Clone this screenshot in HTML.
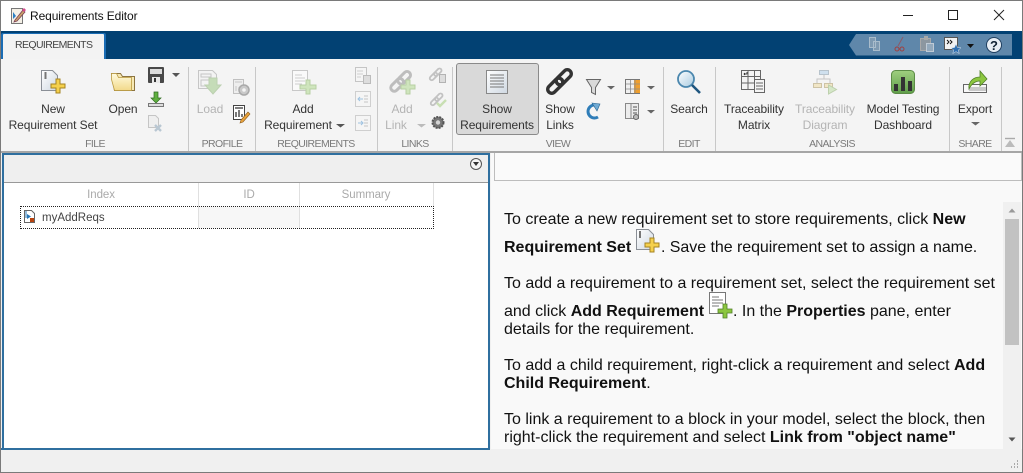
<!DOCTYPE html>
<html><head><meta charset="utf-8"><title>Requirements Editor</title>
<style>
html,body{margin:0;padding:0;background:#f0f0f0}
#w{position:relative;width:1023px;height:473px;overflow:hidden;background:#f0f0f0;font-family:"Liberation Sans",sans-serif}
#w div,#w span.a{position:absolute}
.l{position:absolute;font-size:12px;line-height:16px;letter-spacing:-.08px;color:#333;white-space:nowrap;transform:translateX(-50%)}
.d{color:#b4b4b4}
.g{position:absolute;top:137px;font-size:10.5px;line-height:14px;letter-spacing:-.6px;color:#7a7a7a;white-space:nowrap;transform:translateX(-50%)}
.s{position:absolute;top:67px;width:1px;height:84px;background:#c8c8c8}
.p{position:absolute;left:504px;font-size:16px;line-height:18px;color:#111;white-space:nowrap}
svg{position:absolute;left:0;top:0}
</style></head><body><div id="w">
<div style="left:0;top:0;width:1023px;height:31px;background:#fff"></div>
<div style="left:0;top:31px;width:1023px;height:28px;background:#024173"></div>
<div style="left:1px;top:33px;width:105px;height:26px;background:#1a6cb4;border-radius:2px 2px 0 0"></div>
<div style="left:3px;top:34px;width:101px;height:25px;background:#f3f3f3;border-radius:1px 1px 0 0"></div>
<div style="left:0;top:59px;width:1023px;height:92px;background:#f4f4f4"></div>
<div style="left:0;top:151px;width:1023px;height:2px;background:#a6a6a6"></div>
<div style="left:456px;top:63px;width:81px;height:70px;background:#d9d9d9;border:1px solid #8a8a8a;border-radius:3px"></div>

<div style="left:30px;top:8px;font-size:12px;line-height:16px;letter-spacing:-.1px;color:#111">Requirements Editor</div>
<div style="left:15px;top:37px;font-size:10.5px;line-height:16px;letter-spacing:-.6px;color:#444">REQUIREMENTS</div>

<div class="s" style="left:188px"></div><div class="s" style="left:255px"></div><div class="s" style="left:377px"></div><div class="s" style="left:452px"></div><div class="s" style="left:663px"></div><div class="s" style="left:715px"></div><div class="s" style="left:949px"></div><div class="s" style="left:1001px"></div>

<span class="l" style="left:53px;top:101px">New</span><span class="l" style="left:53px;top:117px">Requirement Set</span>
<span class="l" style="left:123px;top:101px">Open</span>
<span class="l d" style="left:210px;top:101px">Load</span>
<span class="l" style="left:303px;top:101px">Add</span><span class="l" style="left:298px;top:117px">Requirement</span>
<span class="l d" style="left:402px;top:101px">Add</span><span class="l d" style="left:396px;top:117px">Link</span>
<span class="l" style="left:497px;top:101px">Show</span><span class="l" style="left:497px;top:117px">Requirements</span>
<span class="l" style="left:560px;top:101px">Show</span><span class="l" style="left:560px;top:117px">Links</span>
<span class="l" style="left:689px;top:101px">Search</span>
<span class="l" style="left:754px;top:101px">Traceability</span><span class="l" style="left:754px;top:117px">Matrix</span>
<span class="l d" style="left:825px;top:101px">Traceability</span><span class="l d" style="left:825px;top:117px">Diagram</span>
<span class="l" style="left:903px;top:101px">Model Testing</span><span class="l" style="left:903px;top:117px">Dashboard</span>
<span class="l" style="left:975px;top:101px">Export</span>

<span class="g" style="left:95px">FILE</span><span class="g" style="left:222px">PROFILE</span><span class="g" style="left:316px">REQUIREMENTS</span><span class="g" style="left:415px">LINKS</span><span class="g" style="left:558px">VIEW</span><span class="g" style="left:689px">EDIT</span><span class="g" style="left:832px">ANALYSIS</span><span class="g" style="left:975px">SHARE</span>

<!-- left panel -->
<div style="left:2px;top:153px;width:484px;height:293px;border:2px solid #2f6f9f;background:#fff"></div>
<div style="left:4px;top:155px;width:484px;height:27px;background:#efefef;border-bottom:1px solid #999"></div>
<div style="left:199px;top:206px;width:100px;height:22px;background:#f7f7f7"></div>
<div style="left:198px;top:183px;width:1px;height:45px;background:#e0e0e0"></div>
<div style="left:299px;top:183px;width:1px;height:45px;background:#e0e0e0"></div>
<div style="left:433px;top:183px;width:1px;height:23px;background:#e0e0e0"></div>
<div style="left:20px;top:206px;width:412px;height:21px;border:1px dotted #222"></div>
<span class="l" style="left:101px;top:187px;font-size:11.5px;color:#aaa">Index</span>
<span class="l" style="left:249px;top:187px;font-size:11.5px;color:#aaa">ID</span>
<span class="l" style="left:366px;top:187px;font-size:11.5px;color:#aaa">Summary</span>
<div style="left:42px;top:210px;font-size:11.5px;line-height:16px;color:#444">myAddReqs</div>

<!-- right panel -->
<div style="left:491px;top:153px;width:532px;height:296px;background:#f9f9f9"></div>
<div style="left:494px;top:153px;width:526px;height:27px;border:1px solid #bdbdbd;border-top:0;background:#fafafa"></div>
<div style="left:1003px;top:202px;width:18px;height:247px;background:#f0f0f0"></div>
<div style="left:1005px;top:219px;width:14px;height:126px;background:#c2c2c2"></div>

<div class="p" style="top:211px">To create a new requirement set to store requirements, click <b>New</b></div>
<div class="p" style="top:239px"><b>Requirement Set</b></div>
<div class="p" style="top:239px;left:661px;letter-spacing:-.05px">. Save the requirement set to assign a name.</div>
<div class="p" style="top:275px">To add a requirement to a requirement set, select the requirement set</div>
<div class="p" style="top:303px">and click <b>Add Requirement</b></div>
<div class="p" style="top:303px;left:733px">. In the <b>Properties</b> pane, enter</div>
<div class="p" style="top:321px">details for the requirement.</div>
<div class="p" style="top:357px">To add a child requirement, right-click a requirement and select <b>Add</b></div>
<div class="p" style="top:375px"><b>Child Requirement</b>.</div>
<div class="p" style="top:411px">To link a requirement to a block in your model, select the block, then</div>
<div class="p" style="top:429px">right-click the requirement and select <b>Link from "object name"</b></div>
<div style="left:0;top:449px;width:1023px;height:23px;background:#f0f0f0"></div>
<div style="left:0;top:448px;width:490px;height:2px;background:#2f6f9f"></div>

<svg width="1023" height="473" viewBox="0 0 1023 473" fill="none">
<defs>
<linearGradient id="dg" x1="0" y1="0" x2="1" y2="1"><stop offset="0" stop-color="#fff"/><stop offset="1" stop-color="#cfd8e2"/></linearGradient>
<linearGradient id="fo" x1="0" y1="0" x2="0" y2="1"><stop offset="0" stop-color="#fffbe0"/><stop offset="1" stop-color="#f2d98a"/></linearGradient>
<linearGradient id="gb" x1="0" y1="0" x2="0" y2="1"><stop offset="0" stop-color="#9fcf7f"/><stop offset="1" stop-color="#5f9e4a"/></linearGradient>
<linearGradient id="lens" x1="0" y1="0" x2="1" y2="1"><stop offset="0" stop-color="#fff"/><stop offset="1" stop-color="#a9cbe0"/></linearGradient>
</defs>
<!-- window frame -->
<path d="M0 .5H1023M.5 0V473M1022.5 0V473M0 472.5H1023" stroke="#7a7a7a"/>
<!-- app icon -->
<path d="M11.5 8.5h11v15h-11z" fill="#f4f0e6" stroke="#777"/>
<path d="M13 12l3 4-3 3z" fill="#2b7fc4"/><path d="M15 20l8-10 2 2-8 9-3 1z" fill="#c9a26a" stroke="#7b3f55" stroke-width=".8"/><path d="M22 10l2-2 2 2-2 2z" fill="#d24a8a"/>
<!-- window controls -->
<path d="M903 15.5h10" stroke="#222"/><rect x="948.5" y="10.5" width="9" height="9" stroke="#222"/><path d="M994 10l10 10M1004 10l-10 10" stroke="#222"/>
<!-- QAB -->
<path d="M849 45l7-11h156v21.500h-156z" fill="#5f87aa"/>
<path d="M869.500 37.500h6v10h-6zM873.500 41.500h6v9h-6z" fill="#7f9ab1" stroke="#a9bccb"/>
<path d="M903 37l-5 9" stroke="#8b5a68"/><circle cx="897" cy="49" r="2" stroke="#a04040"/><circle cx="902" cy="49" r="2" stroke="#a04040"/>
<path d="M920.500 38.500h10v12h-10z" fill="#8c97a0" stroke="#a9a9a9"/><path d="M924 36h4v4h-4z" fill="#a8a8a8"/><path d="M926.500 43.500h7v8h-7z" fill="#93a9bc" stroke="#bfcbd6"/>
<path d="M944.500 37.500h13v12h-13z" fill="#f2f2f2" stroke="#555"/><path d="M947 40l2 2-2 2M950 40l2 2-2 2" stroke="#111"/><path d="M956 44l1.500 3.500 3.500.3-2.700 2.200.9 3.500-3.200-1.900-3.200 1.900.9-3.500-2.700-2.200 3.500-.3z" fill="#2f6fb0" stroke="#dbe8f4" stroke-width=".5"/>
<path d="M967 44h7l-3.500 4z" fill="#111"/>
<circle cx="994" cy="45" r="7.500" fill="#e8eef4" stroke="#1f3f60"/><text x="994" y="50" text-anchor="middle" font-family="Liberation Sans" font-weight="700" font-size="13" fill="#123">?</text>

<!-- New Req -->
<path d="M41.500 70.500h11l5 5v15h-16z" fill="url(#dg)" stroke="#8a8f96"/><path d="M45.500 72v7" stroke="#777" stroke-width="2"/>
<path d="M56 79h4v5h5v4h-5v5h-4v-5h-5v-4h5z" fill="#f5d04c" stroke="#a58322"/>
<!-- Open -->
<path d="M111.500 73.500h9l2 3h12v14h-20z" fill="#f7e9b4" stroke="#8c7440"/><path d="M111.500 73.500v6l3 11h17v-13h-13l-2-4z" fill="url(#fo)" stroke="#b9993f" stroke-width=".8"/>
<!-- Save -->
<rect x="148" y="67" width="16" height="16" rx="1" fill="#484848"/><rect x="150" y="69" width="12" height="5" fill="#dcdcdc"/><rect x="152" y="77" width="8" height="6" fill="#e8e8e8"/><rect x="154" y="78" width="2" height="4" fill="#333"/>
<path d="M172 73h8l-4 4z" fill="#555"/>
<!-- Import -->
<path d="M154 92h4v6h3l-5 5-5-5h3z" fill="#5fae3f" stroke="#2d6b1e" stroke-width=".7"/><rect x="148.500" y="103.500" width="15" height="3" fill="#ddd" stroke="#777"/>
<!-- Delete -->
<path d="M148.500 115.500h7l3 3v9h-10z" fill="#efefef" stroke="#c5c5c5"/><path d="M155 125l6 6M161 125l-6 6" stroke="#b9c7d2" stroke-width="2.400"/>
<!-- Load -->
<path d="M198.500 70.500h14l4 4v14h-18z" fill="#f3f3f3" stroke="#c6c6c6"/><path d="M201 74h10v3h-10zM201 80h11v6h-11z" stroke="#c6c6c6"/>
<path d="M209 78h8v7h4l-8 9-8-9h4z" fill="#c5dcb8" stroke="#bcd0b0"/>
<!-- Profile small -->
<path d="M233.500 79.500h10v14h-10z" fill="#eee" stroke="#c0c0c0"/><path d="M235 82h7M236 91v-5M239 91v-4" stroke="#c5c5c5"/><circle cx="244" cy="90" r="5" fill="#c9c9c9" stroke="#a9a9a9" stroke-width="1.500"/><circle cx="244" cy="90" r="1.800" fill="#f4f4f4"/>
<path d="M233.500 105.500h11v14h-11z" fill="#fff" stroke="#444"/><path d="M235 108h8M236 117v-5M239 117v-7M242 117v-3" stroke="#333" stroke-width="1.300"/><path d="M241 120l7-8 2 2-7 8-3 1z" fill="#e8a33d" stroke="#8d5b1b" stroke-width=".6"/>
<!-- Add req -->
<path d="M292.500 70.500h15v20h-15z" fill="#fafafa" stroke="#c8c8c8"/><path d="M295 75h7M295 78h10M295 81h10M295 84h7" stroke="#cfcfcf"/>
<path d="M306 80h4v5h6v4h-6v5h-4v-5h-6v-4h6z" fill="#cfe5bd" stroke="#b7cfa4"/>
<path d="M336 124h9l-4.500 3.500z" fill="#555"/>
<!-- Req small -->
<path d="M355.500 67.500h11v14h-11z" fill="#f5f5f5" stroke="#c5c5c5"/><path d="M357 71h6M357 74h6M357 77h4" stroke="#cfcfcf"/><path d="M363.500 75.500h7v8h-7z" fill="#ddd" stroke="#bbb"/>
<path d="M355.500 91.500h15v15h-15z" fill="#f5f5f5" stroke="#cfcfcf"/><path d="M364 96h4M364 99h4M364 102h4" stroke="#c5c5c5"/><path d="M363 99h-5m2-2l-2 2 2 2" stroke="#9ec2e0"/>
<path d="M355.500 115.500h15v15h-15z" fill="#f5f5f5" stroke="#cfcfcf"/><path d="M364 120h4M364 123h4M364 126h4" stroke="#c5c5c5"/><path d="M358 123h5m-2-2l2 2-2 2" stroke="#9ec2e0"/>
<!-- Add link -->
<g transform="rotate(-45 401 81)" stroke="#bdbdbd" stroke-width="3"><rect x="388" y="77.500" width="15" height="7" rx="3.500"/><rect x="398" y="77.500" width="15" height="7" rx="3.500"/></g>
<path d="M406 80h4v5h5v4h-5v5h-4v-5h-5v-4h5z" fill="#cfe5bd" stroke="#b7cfa4"/>
<path d="M417 124h9l-4.500 3.500z" fill="#bbb"/>
<!-- Links small -->
<g transform="rotate(-45 436 74)" stroke="#c2c2c2" stroke-width="1.800"><rect x="428" y="72" width="9" height="4" rx="2"/><rect x="434" y="72" width="9" height="4" rx="2"/></g><rect x="439.500" y="74.500" width="6" height="8" fill="#ddd" stroke="#b3b3b3"/>
<g transform="rotate(-45 437 99)" stroke="#c2c2c2" stroke-width="1.800"><rect x="429" y="97" width="9" height="4" rx="2"/><rect x="435" y="97" width="9" height="4" rx="2"/></g><path d="M437 103l3 3 6-6" stroke="#c8dfb3" stroke-width="2.400"/>
<circle cx="438" cy="122.500" r="5.500" fill="#777" stroke="#555" stroke-width="2" stroke-dasharray="2 1"/><circle cx="438" cy="122.500" r="2.200" fill="#d5d5d5"/>
<!-- Show reqs -->
<rect x="486.500" y="70.500" width="21" height="23" fill="url(#dg)" stroke="#888"/><path d="M490 75h14M490 78h14M490 81h14M490 84h14M490 87h14" stroke="#777"/>
<!-- Show links -->
<g transform="rotate(-45 559.500 81.500)" stroke="#333" stroke-width="3.400"><rect x="544.500" y="77.500" width="18" height="8" rx="4"/><rect x="556.500" y="77.500" width="18" height="8" rx="4"/></g>
<!-- Filter -->
<path d="M586.500 79.500h14l-5 8v7l-4-2v-5z" fill="#d9d9d9" stroke="#666"/>
<path d="M607 86h8l-4 3.500z" fill="#666"/>
<!-- Refresh -->
<path d="M598 106a6.500 6.500 0 1 0 0 11" stroke="#2f7db8" stroke-width="3"/><path d="M592 103l8 1-3 7z" fill="#6faad4" stroke="#25628f" stroke-width=".6"/>
<!-- Table -->
<rect x="625.500" y="79.500" width="14" height="14" fill="#f0f0f0" stroke="#777"/><rect x="634" y="80" width="6" height="13" fill="#ef9f2e"/><path d="M626 84h14M626 89h14M630.500 80v13M635 80v13" stroke="#8c8c8c" stroke-width=".8"/>
<path d="M647 86h8l-4 3.500z" fill="#666"/>
<path d="M625.500 103.500h13v15h-13z" fill="#ececec" stroke="#888"/><path d="M631 104v14" stroke="#888"/><path d="M633 107h4M633 110h4M633 113h4" stroke="#555"/><circle cx="636" cy="117" r="2.500" fill="#bbb" stroke="#666"/>
<path d="M647 110h8l-4 3.500z" fill="#666"/>
<!-- Search -->
<circle cx="686" cy="79" r="8" fill="url(#lens)" stroke="#4b87ae" stroke-width="1.800"/><path d="M692 85l8 8" stroke="#1f567f" stroke-width="2.600"/>
<!-- Matrix -->
<path d="M741.500 70.500h19v19h-19zM741.500 76.500h19M741.500 83h19M748 70.500v19M754.500 70.500v19" stroke="#666"/><path d="M747 72v2h-3m1-1l-1 1 1 1" stroke="#222" stroke-width=".8"/>
<rect x="754.500" y="79.500" width="10" height="13" fill="#f4f4f4" stroke="#666"/><path d="M756 83h7M756 86h7M756 89h7" stroke="#666"/>
<!-- Diagram -->
<rect x="819.500" y="70.500" width="9" height="4" fill="#cfe0ee" stroke="#b7c3cc"/><path d="M824 75v4M817 83v-4h13v4" stroke="#c5c5c5"/><rect x="813.500" y="83.500" width="8" height="4" fill="#f1e6c6" stroke="#cdc3a6"/><rect x="824.500" y="83.500" width="8" height="4" fill="#f1e6c6" stroke="#cdc3a6"/>
<path d="M828.500 85v9l8-4.500z" fill="#d5e7c8" stroke="#bdd0ad"/>
<!-- Dashboard -->
<rect x="891.500" y="70.500" width="23" height="23" rx="4" fill="url(#gb)" stroke="#5c8c46"/><rect x="894" y="84" width="4" height="7" fill="#333"/><rect x="901" y="77" width="4" height="14" fill="#333"/><rect x="908" y="81" width="4" height="10" fill="#333"/>
<!-- Export -->
<path d="M963.500 84.500h23v8h-23z" fill="#f8f8f8" stroke="#666"/><rect x="969" y="87" width="17" height="4" fill="#c9c9c9"/>
<path d="M969 89c-1-8 5-12 11-12v-6l7 8-7 7v-5c-4 0-8 2-11 8z" fill="#8cc63f" stroke="#4f7f28" stroke-width=".8"/>
<path d="M971 122h9l-4.500 3.500z" fill="#666"/>
<!-- Collapse -->
<path d="M1005 138.500h10" stroke="#aaa" stroke-width="1.400"/><path d="M1010 140l5 7h-10z" fill="#bbb"/>
<!-- panel dropdown -->
<circle cx="476" cy="164" r="5.500" fill="#f5f5f5" stroke="#555"/><path d="M473 162h6l-3 4z" fill="#333"/>
<!-- row icon -->
<path d="M24.500 210.500h7l3 3v9h-10z" fill="#fff" stroke="#666"/><path d="M26 211v7" stroke="#2878b8"/><path d="M27 214l4 2.500-4 2.500z" fill="#2878b8"/><rect x="30" y="218" width="4" height="4" fill="#b8430f"/>
<!-- inline icons -->
<path d="M636.500 229.500h12l5 5v15h-17z" fill="url(#dg)" stroke="#8a8f96"/><path d="M640 231v7" stroke="#777" stroke-width="2"/><path d="M650 238h4v5h5v4h-5v5h-4v-5h-5v-4h5z" fill="#f5d04c" stroke="#a58322"/>
<path d="M709.500 292.500h16v21h-16z" fill="#fff" stroke="#777"/><path d="M712 297h7M712 300h11M712 303h11M712 306h7" stroke="#777"/><path d="M723 304h4v5h5v4h-5v5h-4v-5h-5v-4h5z" fill="#8cc63f" stroke="#4f7f28" stroke-width=".8"/>
<!-- scrollbar arrows -->
<path d="M1008.500 212.500l3.500-4 3.500 4z" fill="#999"/><path d="M1008.500 437.500l3.500 4 3.500-4z" fill="#555"/>
<!-- grip -->
<path d="M1017 461h1M1014 464h1M1017 464h1M1011 467h1M1014 467h1M1017 467h1" stroke="#aaa" stroke-width="2"/>
</svg>
</div></body></html>
